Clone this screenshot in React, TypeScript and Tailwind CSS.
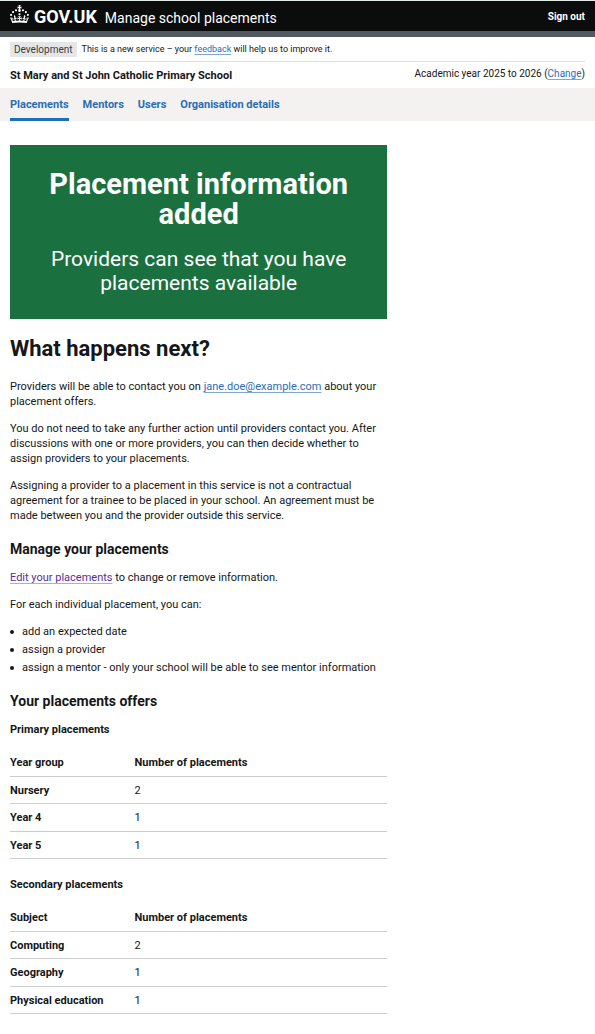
import type { ReactNode } from "react";

type Row = { label: string; count: number };

const navItems = ["Placements", "Mentors", "Users", "Organisation details"];

const primary: Row[] = [
  { label: "Nursery", count: 2 },
  { label: "Year 4", count: 1 },
  { label: "Year 5", count: 1 },
];

const secondary: Row[] = [
  { label: "Computing", count: 2 },
  { label: "Geography", count: 1 },
  { label: "Physical education", count: 1 },
];

const abilities = [
  "add an expected date",
  "assign a provider",
  "assign a mentor - only your school will be able to see mentor information",
];

function Crown() {
  return (
    <svg viewBox="0 0 32 30" className="h-[18px] w-[19px] shrink-0 fill-current" aria-hidden="true">
      <path d="M22.6 10.4c-1 .4-2-.1-2.4-1-.4-.9.1-2 1-2.4.9-.4 2 .1 2.4 1s-.1 2-1 2.4m-5.9 6.7c-.9.4-2-.1-2.4-1-.4-.9.1-2 1-2.4.9-.4 2 .1 2.4 1s-.1 2-1 2.4m10.8-3.7c-1 .4-2-.1-2.4-1-.4-.9.1-2 1-2.4.9-.4 2 .1 2.4 1s0 2-1 2.4m3.3 4.8c-1 .4-2-.1-2.4-1-.4-.9.1-2 1-2.4.9-.4 2 .1 2.4 1s-.1 2-1 2.4M17 4.7l2.3 1.2V2.5l-2.3.7-.2-.2.9-3h-3.4l.9 3-.2.2c-.1.1-2.3-.7-2.3-.7v3.4L15 4.7c.1.1.1.2.2.2l-1.3 4c-.1.2-.1.4-.1.6 0 1.1.8 2 1.9 2.2h.7c1-.2 1.9-1.1 1.9-2.1 0-.2 0-.4-.1-.6l-1.3-4c-.1-.2 0-.2.1-.3m-7.6 5.7c.9.4 2-.1 2.4-1 .4-.9-.1-2-1-2.4-.9-.4-2 .1-2.4 1s0 2 1 2.4m-5 3c.9.4 2-.1 2.4-1 .4-.9-.1-2-1-2.4-.9-.4-2 .1-2.4 1s.1 2 1 2.4m-3.2 4.8c.9.4 2-.1 2.4-1 .4-.9-.1-2-1-2.4-.9-.4-2 .1-2.4 1s0 2 1 2.4m14.8 11c4.4 0 8.6.3 12.3.8 1.1-4.5 2.4-7 3.7-8.8l-2.5-.9c.2 1.3.3 1.9 0 2.7-.4-.4-.8-1.1-1.1-2.3l-1.2 4c.7-.5 1.3-.8 2-.9-1.1 2.5-2.6 3.1-3.5 3-1.1-.2-1.7-1.2-1.5-2.1.3-1.2 1.5-1.5 2.1-.1 1.1-2.3-.8-3-2-2.3 1.9-1.9 2.1-3.5.6-5.6-2.1 1.6-2.1 3.2-1.2 5.5-1.2-1.4-3.2-.6-2.5 1.6.9-1.4 2.1-.5 1.9.8-.2 1.1-1.7 2.1-3.5 1.9-2.7-.2-2.9-2.1-2.9-3.6.7-.1 1.9.5 2.9 1.9l.4-4.3c-1.1 1.1-2.1 1.4-3.2 1.4.4-1.2 2.1-3 2.1-3h-5.4s1.7 1.9 2.1 3c-1.1 0-2.1-.2-3.2-1.4l.4 4.3c1-1.4 2.2-2 2.9-1.9-.1 1.5-.2 3.4-2.9 3.6-1.9.2-3.4-.8-3.5-1.9-.2-1.3 1-2.2 1.9-.8.7-2.3-1.2-3-2.5-1.6.9-2.2.9-3.9-1.2-5.5-1.5 2-1.3 3.7.6 5.6-1.2-.7-3.1 0-2 2.3.6-1.4 1.8-1.1 2.1.1.2.9-.3 1.9-1.5 2.1-.9.2-2.4-.5-3.5-3 .6 0 1.2.3 2 .9l-1.2-4c-.3 1.1-.7 1.9-1.1 2.3-.3-.8-.2-1.4 0-2.7l-2.9.9C1.3 23 2.6 25.5 3.7 30c3.7-.5 7.9-.8 12.3-.8" />
    </svg>
  );
}

function Link({ visited = false, children }: { visited?: boolean; children: ReactNode }) {
  return (
    <a
      href="#"
      className={
        visited
          ? "text-[#5a2d9c] underline decoration-[#b9a5d8] underline-offset-2"
          : "text-[#2b6cb8] underline decoration-[#7ea7d6] underline-offset-2"
      }
    >
      {children}
    </a>
  );
}

function PlacementsTable({ title, heading, rows }: { title: string; heading: string; rows: Row[] }) {
  return (
    <section>
      <h4 className="mb-3 font-bold">{title}</h4>
      <table className="w-full border-collapse text-left">
        <thead>
          <tr className="border-b border-[#cbcdce]">
            <th scope="col" className="w-[33%] py-[6px] font-bold">{heading}</th>
            <th scope="col" className="py-[6px] font-bold">Number of placements</th>
          </tr>
        </thead>
        <tbody>
          {rows.map((row) => (
            <tr key={row.label} className="h-7 border-b border-[#cbcdce] odd:h-[27px]">
              <th scope="row" className="font-bold">{row.label}</th>
              <td>{row.count}</td>
            </tr>
          ))}
        </tbody>
      </table>
    </section>
  );
}

export default function App() {
  return (
    <div className="min-h-screen bg-white font-['Roboto','Liberation_Sans',sans-serif] text-[11px] leading-[15px] text-[#151718]">
      <header className="border-t border-b-6 border-t-[#e3ebe8] border-b-[#505a5f] bg-[#0b0c0c] text-white">
        <div className="flex h-[30px] items-center justify-between px-[10px]">
          <div className="flex items-baseline gap-2">
            <a href="#" className="flex items-baseline gap-[5px]">
              <Crown />
              <span className="text-lg leading-5 font-bold">GOV.UK</span>
            </a>
            <a href="#" className="text-sm leading-5">Manage school placements</a>
          </div>
          <a href="#" className="text-[10px] font-bold">Sign out</a>
        </div>
      </header>

      <div className="px-[10px]">
        <div className="flex items-center gap-[5px] border-b border-[#dcdfe0] pt-[5px] pb-1">
          <strong className="bg-[#e5e6e7] px-1 text-[10px] font-normal text-[#383f43]">Development</strong>
          <span className="text-[9px]">
            This is a new service – your <Link>feedback</Link> will help us to improve it.
          </span>
        </div>
        <div className="flex h-[26px] items-center justify-between">
          <span className="font-bold">St Mary and St John Catholic Primary School</span>
          <span className="pb-[3px] text-[10px]">
            Academic year 2025 to 2026 (<Link>Change</Link>)
          </span>
        </div>
      </div>

      <nav className="bg-[#f3f2f1] px-[10px]" aria-label="Primary">
        <ul className="flex gap-[14px]">
          {navItems.map((item, index) => (
            <li key={item}>
              <a
                href="#"
                aria-current={index === 0 ? "page" : undefined}
                className={
                  index === 0
                    ? "block border-b-3 border-[#1d70b8] pt-[9px] pb-[6px] font-bold text-[#2a6db5]"
                    : "block border-b-3 border-transparent pt-[9px] pb-[6px] font-bold text-[#2a6db5]"
                }
              >
                {item}
              </a>
            </li>
          ))}
        </ul>
      </nav>

      <main className="grid grid-cols-3 gap-[18px] px-[10px] pt-6 pb-5">
        <div className="col-span-2">
          <div className="mb-[18px] bg-[#1b703f] px-[21px] py-6 text-center text-white">
            <h1 className="mb-[18px] text-[29px] leading-[30px] font-bold">Placement information added</h1>
            <p className="text-[21px] leading-6">Providers can see that you have placements available</p>
          </div>

          <h2 className="mb-[18px] text-[22px] leading-6 font-bold">What happens next?</h2>
          <p className="mb-3">
            Providers will be able to contact you on <Link>jane.doe@example.com</Link> about your placement offers.
          </p>
          <p className="mb-3">
            You do not need to take any further action until providers contact you. After discussions with one or more
            providers, you can then decide whether to assign providers to your placements.
          </p>
          <p className="mb-[17px]">
            Assigning a provider to a placement in this service is not a contractual agreement for a trainee to be
            placed in your school. An agreement must be made between you and the provider outside this service.
          </p>

          <h3 className="mb-3 text-sm leading-[18px] font-bold">Manage your placements</h3>
          <p className="mb-3">
            <Link visited>Edit your placements</Link> to change or remove information.
          </p>
          <p className="mb-3">For each individual placement, you can:</p>
          <ul className="mb-[17px] space-y-[3px]">
            {abilities.map((text) => (
              <li
                key={text}
                className="flex items-center before:mr-2 before:size-1 before:shrink-0 before:rounded-full before:bg-[#151718] before:content-['']"
              >
                {text}
              </li>
            ))}
          </ul>

          <h3 className="mb-3 text-sm leading-[18px] font-bold">Your placements offers</h3>
          <div className="flex flex-col gap-[18px]">
            <PlacementsTable title="Primary placements" heading="Year group" rows={primary} />
            <PlacementsTable title="Secondary placements" heading="Subject" rows={secondary} />
          </div>
        </div>
      </main>
    </div>
  );
}
